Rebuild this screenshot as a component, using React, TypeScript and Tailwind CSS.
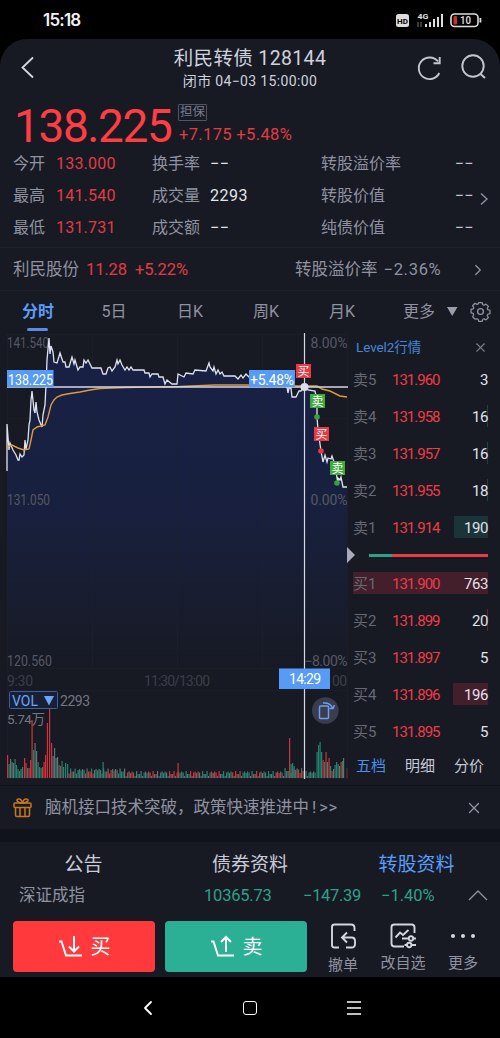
import React from 'react';
import { ChevronLeft, ChevronRight, X } from 'lucide-react';

type Level = { name: string; price: string; volume: string; bar?: string };

const asks: Level[] = [
	{ name: '卖5', price: '131.960', volume: '3' },
	{ name: '卖4', price: '131.958', volume: '16', bar: 'w-px bg-[#1b4543]' },
	{ name: '卖3', price: '131.957', volume: '16', bar: 'w-px bg-[#1b4543]' },
	{ name: '卖2', price: '131.955', volume: '18', bar: 'w-px bg-[#1b4543]' },
	{ name: '卖1', price: '131.914', volume: '190', bar: 'w-[34px] bg-[#1a3438]' },
];

const bids: Level[] = [
	{ name: '买1', price: '131.900', volume: '763', bar: 'w-[135px] bg-[#421f2a]' },
	{ name: '买2', price: '131.899', volume: '20', bar: 'w-px bg-[#5a2530]' },
	{ name: '买3', price: '131.897', volume: '5' },
	{ name: '买4', price: '131.896', volume: '196', bar: 'w-[35px] bg-[#421f2a]' },
	{ name: '买5', price: '131.895', volume: '5' },
];

const stats = [
	['今开', '133.000', '换手率', '−−', '转股溢价率'],
	['最高', '141.540', '成交量', '2293', '转股价值'],
	['最低', '131.731', '成交额', '−−', '纯债价值'],
];

const pricePoints =
	'7,471 7,424 9,450 10,443 13,450 16,455 18,460 19,460 20,454 22,457 24,455 25,440 26,449 28,440 29,425 30,420 31,400 32,391 34,410 35,413 36,402 37,412 39,420 42,427 43,415 45,405 46,385 47,360 49,338 50,354 51,346 53,352 54,362 57,363 60,353 63,362 65,362 66,367 69,367 72,357 74,364 75,360 78,370 80,367 83,367 84,360 86,363 88,360 92,368 101,368 103,374 106,374 108,368 110,367 112,371 115,367 117,360 118,364 120,360 122,365 125,370 127,367 129,370 131,367 133,370 135,370 144,370 145,373 149,373 150,377 152,374 158,374 159,377 163,377 165,384 167,380 172,384 177,384 178,374 184,377 186,373 193,374 195,370 206,371 209,363 210,367 213,371 214,367 216,374 218,370 220,374 222,372 224,376 235,376 238,379 241,375 243,378 246,374 249,377 260,376 270,378 280,379 287,387 288,393 289,388 291,388 292,397 296,397 299,391 301,391 303,387 308,390 315,391 316,396 317,398 317,417 318,430 320,444 321,451 323,462 325,455 327,462 328,458 331,459 332,456 335,465 337,478 338,483 338,478 340,480 341,477 343,487 347,487';
const avgPoints =
	'7,447 12,445 18,448 24,450 29,449 31,440 33,430 37,427 45,425 48,417 51,405 54,400 57,397 62,395 70,393.5 80,392 90,390 100,388.5 125,387.5 180,386.5 215,385 248,385 290,386 317,386 322,389 330,391 340,396 347,397';

// x, height, colour (r = up, g = down, n = flat)
const peaks: [number, number, string][] = [
	[7, 23, 'r'], [8.5, 14, 'g'], [10, 19, 'n'], [11.5, 16, 'n'], [13, 15, 'n'], [14.5, 19, 'g'], [16, 13, 'g'], [17.5, 9, 'g'],
	[19, 7, 'g'], [20.5, 9, 'n'], [22, 11, 'g'], [24, 20, 'r'], [25.5, 15, 'r'], [27, 10, 'g'], [28.5, 10, 'r'], [30, 18, 'r'],
	[31.5, 58, 'r'], [33, 28, 'g'], [34.5, 35, 'n'], [36, 27, 'n'], [37.5, 16, 'g'], [39, 11, 'g'], [40.5, 10, 'g'], [42, 11, 'r'],
	[43.5, 16, 'r'], [45, 23, 'r'], [46.8, 55, 'r'], [49, 69, 'r'], [51, 35, 'r'], [52.5, 22, 'n'], [54, 30, 'n'], [55.5, 20, 'n'],
	[57, 21, 'n'], [58.5, 13, 'g'], [60, 12, 'r'], [61.5, 17, 'g'], [63, 11, 'g'], [65, 15, 'g'], [67, 14, 'g'], [102.5, 16, 'g'],
	[177.5, 15, 'r'], [289, 40, 'r'], [290.5, 14, 'g'], [292, 15, 'g'], [293.5, 12, 'g'], [316.5, 26, 'g'], [318, 33, 'g'],
	[319.5, 36, 'g'], [321, 26, 'g'], [322.5, 18, 'r'], [324, 16, 'g'], [325.5, 26, 'r'], [327, 16, 'n'], [328.5, 20, 'r'],
	[330, 12, 'g'], [331.5, 7, 'r'], [333, 9, 'n'], [334.5, 13, 'g'], [336, 16, 'g'], [337.5, 14, 'g'], [339, 12, 'n'],
	[340.5, 16, 'r'], [342, 17, 'g'], [343, 20, 'n'],
];

const quiet: [number, number, string][] = Array.from({ length: 165 }, (_, i) => {
	const x = 68.5 + i * 1.5;
	const base = x < 125 ? 4.5 : x > 284 && x < 304 ? 5 : 2;
	return [x, base + ((i * 7 + i * i * 3) % 11) / 2, 'rgnrngg'[(i * 5 + ((i * i) % 4)) % 7]];
});

const barColor: Record<string, string> = { r: '#cf343d', g: '#24826f', n: '#5f7571' };

const Markers = () => (
	<g fontSize="12" fill="#fff" textAnchor="middle" className="font-['Noto_Sans_CJK_SC',sans-serif]">
		<circle cx="317" cy="417" r="2.8" fill="#35a23b" />
		<circle cx="321" cy="451" r="2.8" fill="#ea3844" />
		<circle cx="337" cy="483" r="2.8" fill="#35a23b" />
		<rect x="296" y="364" width="15" height="14" fill="#ea3844" />
		<text x="303.5" y="375.5">买</text>
		<rect x="310" y="394" width="15" height="14" fill="#3faa3c" />
		<text x="317.5" y="405.5">卖</text>
		<rect x="314" y="427" width="15" height="14" fill="#ea3844" />
		<text x="321.5" y="438.5">买</text>
		<rect x="330" y="461" width="15" height="14" fill="#3faa3c" />
		<text x="337.5" y="472.5">卖</text>
	</g>
);

const Chart = () => (
	<svg viewBox="0 332 349 453" width="349" height="453" className="shrink-0">
		<defs>
			<linearGradient id="area" gradientUnits="userSpaceOnUse" x1="0" y1="340" x2="0" y2="668">
				<stop offset="0" stopColor="#182146" />
				<stop offset="0.5" stopColor="#18203f" />
				<stop offset="1" stopColor="#171a24" />
			</linearGradient>
		</defs>
		<polygon points={`7,668 ${pricePoints} 347,668`} fill="url(#area)" />
		<g stroke="#1e222d" strokeOpacity="0.6" fill="none">
			<path d="M7 334.5H347M7 418.5H347M7 500.5H347M7 580.5H347M7 668.5H347M7 690.5H347M7 778.5H347" />
			<path d="M7.5 334V779M92.5 334V668M177.5 334V668M262.5 334V668M347.5 334V779" />
		</g>
		<g fontSize="14" fill="#555864">
			<text x="7" y="347.5" textLength="42" lengthAdjust="spacingAndGlyphs">141.540</text>
			<text x="7" y="505" textLength="43" lengthAdjust="spacingAndGlyphs">131.050</text>
			<text x="7" y="666" textLength="45" lengthAdjust="spacingAndGlyphs">120.560</text>
			<text x="310.5" y="347.5" textLength="37">8.00%</text>
			<text x="310.5" y="505" textLength="37">0.00%</text>
			<text x="304.5" y="666" textLength="43">−8.00%</text>
			<g fill="#3b3e48">
				<text x="7" y="686" textLength="26">9:30</text>
				<text x="144" y="686" textLength="66">11:30/13:00</text>
				<text x="332" y="686" textLength="15">00</text>
			</g>
		</g>
		<polyline points={pricePoints} fill="none" stroke="#dfe3ef" strokeWidth="1.3" />
		<polyline points={avgPoints} fill="none" stroke="#dd9a3c" strokeWidth="1.4" />

		<rect x="9.5" y="691.5" width="48" height="17" rx="1" fill="#182038" stroke="#3d5f9c" />
		<text x="12" y="705.5" fontSize="14" fill="#6ca5f5" textLength="26">VOL</text>
		<path d="M44 696H54L49 705.5Z" fill="#6ca5f5" />
		<text x="60" y="705.5" fontSize="14" fill="#737682" textLength="30">2293</text>
		<text x="7" y="724" fontSize="13.5" fill="#737682" textLength="38">5.74万</text>
		{[...quiet, ...peaks].map(([x, h, c], i) => (
			<rect key={i} x={x} y={778 - h} width="1.2" height={h} fill={barColor[c]} />
		))}
		<rect x="346.5" y="768" width="1" height="10" fill="#7c2730" />

		<path d="M7 387H348" stroke="#d6d9e5" strokeWidth="1.3" />
		<path d="M304.5 333V779" stroke="#d6d9e5" strokeWidth="1.2" />
		<g fill="#569cf7">
			<rect x="7" y="370" width="46.5" height="17" />
			<rect x="249" y="370" width="46" height="17" />
			<rect x="279" y="668.5" width="51" height="20.5" />
		</g>
		<g fontSize="14" fill="#fff">
			<text x="8" y="385" textLength="45" lengthAdjust="spacingAndGlyphs">138.225</text>
			<text x="250" y="385" textLength="44">+5.48%</text>
			<text x="289" y="684" textLength="32">14:29</text>
		</g>
		<circle cx="304.5" cy="387" r="4" fill="#d9dcea" />
		<Markers />
		<circle cx="325.3" cy="710.5" r="13.3" fill="#393d4d" />
		<g fill="none" stroke="#6f9ef0" strokeWidth="1.5">
			<rect x="319.5" y="706" width="9" height="12.5" rx="1" />
			<path d="M323 703C328 702.5 331 704 332.5 708M329.5 708.5H333L334.5 705" />
		</g>
	</svg>
);

const BookRow = ({ row }: { row: Level }) => (
	<div className="relative flex h-[37px] items-center pl-1 pr-3 pt-px text-[15px]">
		{row.bar && <span className={`absolute right-3 top-[7px] h-[22px] ${row.bar}`} />}
		<span className="relative w-[39px] text-[#666975]">{row.name}</span>
		<span className="relative tracking-[-1px] text-[#ef3c46]">{row.price}</span>
		<span className="relative ml-auto tracking-[-0.4px] text-[#e1e3eb]">{row.volume}</span>
	</div>
);

const OrderBook = () => (
	<div className="relative flex flex-1 flex-col">
		<div className="flex h-[29px] items-center justify-between pl-[7px] pr-3 pt-[2px] text-[13.5px] text-[#4686d8]">
			<span className="tracking-[-0.1px]">Level2行情</span>
			<X size={15} strokeWidth={1.7} color="#7a7d88" />
		</div>
		{asks.map((row) => <BookRow key={row.name} row={row} />)}
		<div className="flex h-[18px] items-center pl-5 pr-3">
			<span className="h-[3px] w-[23px] bg-[#2aa285]" />
			<span className="h-[3px] flex-1 bg-[#e63e48]" />
		</div>
		<div className="pt-px">
			{bids.map((row) => <BookRow key={row.name} row={row} />)}
		</div>
		<div className="flex h-8 items-center gap-[19px] pl-[7px] text-[15px] text-[#c6c9d6]">
			<span className="text-[#4b8ff0]">五档</span>
			<span>明细</span>
			<span>分价</span>
		</div>
		<svg className="absolute -left-[2px] top-[214px]" width="9" height="18">
			<path d="M0 1L8 9L0 17Z" fill="#a8abb9" />
		</svg>
	</div>
);

const StatusBar = () => (
	<div className="flex h-[39px] items-center justify-between pl-[43px] pr-[17px] pt-[3px]">
		<span className="text-[17px] font-semibold tracking-[-0.8px] text-[#f2f2f2] font-['Inter',sans-serif]">15:18</span>
		<svg width="88" height="16" fill="#deddda">
			<rect x="1" y="1" width="13" height="13" rx="2.5" />
			<text x="2" y="10.5" fontSize="8" fontWeight="700" fill="#000" textLength="11">HD</text>
			<text x="22.5" y="6" fontSize="8" fontWeight="700" textLength="11" lengthAdjust="spacingAndGlyphs">4G</text>
			<path d="M23 9V14M26 9V14" stroke="#77777a" />
			<path d="M30 11h2v3h-2zM34 9h2v5h-2zM38 6h2v8h-2zM42 4h2v10h-2zM46 1h2v13h-2z" />
			<rect x="56" y="1" width="27" height="12.5" rx="3.5" fill="none" stroke="#deddda" strokeWidth="1.6" />
			<rect x="58.5" y="3" width="3.5" height="8.5" rx="1" fill="#c9302c" />
			<rect x="84.5" y="5" width="1.8" height="4.5" />
			<text x="65" y="11.3" fontSize="11.5" fontWeight="600" textLength="11" lengthAdjust="spacingAndGlyphs">10</text>
		</svg>
	</div>
);

const Header = () => (
	<div className="flex h-14 items-start justify-between px-[13px]">
		<svg width="100" height="56" fill="none" stroke="#d5d8e2" strokeWidth="1.8">
			<path d="M20 18.5L9.5 28.5L20 38.5" />
		</svg>
		<div className="flex flex-col items-center pt-[6px] text-[#cfd2de]">
			<h1 className="text-[19.5px] leading-[28px] tracking-[0.35px]">利民转债 128144</h1>
			<p className="text-[14px] leading-[16px] tracking-[0.35px]">闭市 04−03 15:00:00</p>
		</div>
		<svg width="100" height="56" fill="none" stroke="#c3c6d1" strokeWidth="1.9">
			<path d="M51 22.5A10.8 10.8 0 1 0 52.3 34M52.7 18V24.3H46.5" />
			<circle cx="86" cy="27" r="10.7" />
			<path d="M93.5 35L98 39" />
		</svg>
	</div>
);

const Summary = () => (
	<div className="relative border-b border-[#1e212b] pb-[3px]">
		<div className="flex h-[53px] pl-[14px]">
			<span className="w-[163px] text-[46px] leading-[62px] tracking-[-1.4px] text-[#ff3d43]">138.225</span>
			<div className="flex flex-col items-start pl-px pt-[9px]">
				<span className="flex h-[17px] items-center rounded-[1px] border border-[#515567] px-px text-[12.5px] text-[#777b90]">担保</span>
				<span className="whitespace-pre pl-px text-[16.5px] leading-[27px] tracking-[0.35px] text-[#e33a43]">+7.175 +5.48%</span>
			</div>
		</div>
		{stats.map((s) => (
			<div key={s[0]} className="flex h-8 items-center pl-[13px] pr-[26px] text-[16px] text-[#8f92a0]">
				<span className="w-[43px]">{s[0]}</span>
				<span className="w-[96px] tracking-[0.2px] text-[#e33a43]">{s[1]}</span>
				<span className="w-[58px]">{s[2]}</span>
				<span className="w-[111px] tracking-[0.5px] text-[#e3e5ec]">{s[3]}</span>
				<span>{s[4]}</span>
				<span className="ml-auto tracking-[0.5px] text-[#c3c5cf]">−−</span>
			</div>
		))}
		<svg className="absolute right-3 top-[97px]" width="8" height="14" fill="none" stroke="#8f92a0" strokeWidth="1.4">
			<path d="M1 1.5L7 7L1 12.5" />
		</svg>
	</div>
);

const Gear = () => (
	<svg width="21" height="21" viewBox="0 0 24 24" fill="none" stroke="#8f92a0" strokeWidth="1.6" strokeLinejoin="round">
		<path d="M9.8 1.5h4.4l.7 2.7 1.6.7 2.5-1.4 3 3-1.4 2.500.7 1.600 2.700.7v4.400l-2.700.7-.7 1.600 1.400 2.500-3 3-2.500-1.400-1.600.7-.7 2.700H9.800l-.7-2.700-1.600-.7L5 22.500l-3-3L3.400 17l-.7-1.600L0 14.700v-4.400l2.700-.7.7-1.600L2 5.500l3-3 2.500 1.400 1.600-.7z" transform="translate(1.200 .4) scale(.9)" />
		<circle cx="12" cy="12" r="3.3" />
	</svg>
);

const Periods = () => (
	<div className="flex h-[41px] text-[16px] leading-[41px] text-[#8f92a0]">
		<div className="relative w-[76px] text-center font-bold text-[#5a9dfa]">
			分时
			<span className="absolute bottom-[1px] left-[27px] h-[3px] w-[21px] rounded-sm bg-[#5a8be8]" />
		</div>
		<span className="w-[76px] text-center">5日</span>
		<span className="w-[76px] text-center">日K</span>
		<span className="w-[76px] text-center">周K</span>
		<span className="w-[76px] text-center">月K</span>
		<div className="flex items-center pl-[23px]">
			<span className="w-[44px]">更多</span>
			<svg width="23" height="10"><path d="M0 0H10.5L5.2 9Z" fill="#9a9daa" /></svg>
			<Gear />
		</div>
	</div>
);

const Actions = () => (
	<div className="flex pl-[13px] pt-[9px] text-[20px] text-white">
		<button className="flex h-[51px] w-[142px] items-center justify-center gap-2 rounded bg-[#ff393c]">
			<svg width="25" height="24" fill="none" stroke="#fff" strokeWidth="2">
				<path d="M1 6.5H3.5L8 20.5H24M16 1V16M11 11.5L16 16.5L21 11.5" />
			</svg>
			买
		</button>
		<button className="ml-[10px] flex h-[51px] w-[142px] items-center justify-center gap-2 rounded bg-[#2bb095]">
			<svg width="25" height="24" fill="none" stroke="#fff" strokeWidth="2">
				<path d="M1 6.5H3.5L8 20.5H24M16 17V2M11 7L16 2L21 7" />
			</svg>
			卖
		</button>
		<div className="flex flex-1 pl-[6px] text-[15px] leading-[20px] text-[#8f92a0]">
			<div className="flex w-[60px] flex-col items-center">
				<svg width="28" height="28" className="mt-[1px]" fill="none" stroke="#d3d5df" strokeWidth="1.9">
					<path d="M10 25.5H5.5Q3 25.5 3 23V5Q3 2.5 5.5 2.5H22Q25.5 2.5 25.5 6V9M13 15.5H22.5Q26 15.5 26 19V22Q26 25.5 22.5 25.5H17M18 10.5L13 15.5L18 20.5" />
				</svg>
				<span className="mt-[5px]">撤单</span>
			</div>
			<div className="flex w-[60px] flex-col items-center">
				<svg width="28" height="28" className="mt-[1px]" fill="none" stroke="#d3d5df" strokeWidth="1.9">
					<path d="M15 24.5H5.5Q2.5 24.5 2.5 21.5V5Q2.5 2.5 5.5 2.5H22.5Q25.5 2.5 25.5 5.5V11M6.5 15.5L11 10.5L14 13L19.5 8" />
					<path d="M13 16.5H19.5M24.5 16.5H27M15.5 23H18M22.5 23H27" />
					<circle cx="22" cy="16.5" r="2.2" />
					<circle cx="20.2" cy="23" r="2.2" />
				</svg>
				<span className="mt-[3px]">改自选</span>
			</div>
			<div className="flex w-[60px] flex-col items-center">
				<svg width="28" height="28" className="mt-[1px]" fill="#d3d5df">
					<circle cx="4" cy="14" r="2" />
					<circle cx="14" cy="14" r="2" />
					<circle cx="24" cy="14" r="2" />
				</svg>
				<span className="mt-[3px]">更多</span>
			</div>
		</div>
	</div>
);

const App = () => {
	return (
		<div className="flex h-[1038px] w-[500px] flex-col overflow-hidden bg-black font-['Roboto','Noto_Sans_CJK_SC',sans-serif]">
			<StatusBar />
			<main className="flex h-[938px] flex-col rounded-t-[27px] bg-[#171a23]">
				<Header />
				<Summary />
				<div className="flex h-[43px] items-center border-b border-[#1e212b] pl-[13px] pr-[13px] pt-[2px] text-[16.5px] text-[#8f92a0]">
					<span>利民股份</span>
					<span className="ml-[7px] w-[209px] whitespace-pre tracking-[-0.1px] text-[#e33a43]">11.28  +5.22%</span>
					<span>转股溢价率</span>
					<span className="ml-[6px] tracking-[0.7px]">−2.36%</span>
					<ChevronRight size={18} strokeWidth={1.7} className="ml-auto" />
				</div>
				<Periods />
				<div className="flex h-[453px]">
					<Chart />
					<OrderBook />
				</div>
				<div className="flex h-[44px] items-center border-t border-[#10131b] pl-[13px] pr-[17px] text-[16.5px] text-[#8f92a0]">
					<svg width="20" height="20" fill="none" stroke="#c7781f" strokeWidth="1.5" className="mr-3">
						<rect x="1" y="5" width="17" height="4.5" rx="1" />
						<path d="M2.5 9.5V17Q2.5 18.5 4 18.5H15Q16.5 18.5 16.5 17V9.5M7 9.5V18.5M12 9.5V18.5M9.5 5C4 5 2 1 6 1Q8.5 1 9.5 5Q10.5 1 13 1C17 1 15 5 9.5 5" />
					</svg>
					<span className="pt-[2px]">
						脑机接口技术突破，政策快速推进中
						<span className="px-[3px]">!</span>
						<span className="tracking-[0.5px]">&gt;&gt;</span>
					</span>
					<X size={18} strokeWidth={1.8} className="ml-auto" />
				</div>
				<div className="h-[13px] bg-[#10131b]" />
				<div className="flex h-11 items-center pt-[2px] text-[19px] text-[#c8cbd7]">
					<span className="w-[167px] text-center">公告</span>
					<span className="w-[166px] text-center">债券资料</span>
					<span className="w-[167px] text-center text-[#5a9dfa]">转股资料</span>
				</div>
				<div className="flex h-[26px] items-start pl-[19px] text-[16.5px] leading-[20px] text-[#2ca18a]">
					<span className="w-[185px] text-[#8f92a0]">深证成指</span>
					<span className="w-[99px] tracking-[-0.2px]">10365.73</span>
					<span className="w-[78px] tracking-[-0.3px]">−147.39</span>
					<span>−1.40%</span>
					<svg width="20" height="12" className="ml-auto mr-[12px] mt-[3px]" fill="none" stroke="#8f92a0" strokeWidth="1.3">
						<path d="M1 11L10 2L19 11" />
					</svg>
				</div>
				<Actions />
			</main>
			<nav className="flex flex-1 items-center pl-[136px] text-white">
				<ChevronLeft size={24} strokeWidth={1.8} />
				<span className="ml-[83px] h-[14px] w-[14px] rounded-[3px] border-[1.5px] border-white" />
				<svg width="16" height="16" stroke="#fff" strokeWidth="1.5" className="ml-[89px]">
					<path d="M1 2H15M1 8H15M1 14H15" />
				</svg>
			</nav>
		</div>
	);
};

export default App;
